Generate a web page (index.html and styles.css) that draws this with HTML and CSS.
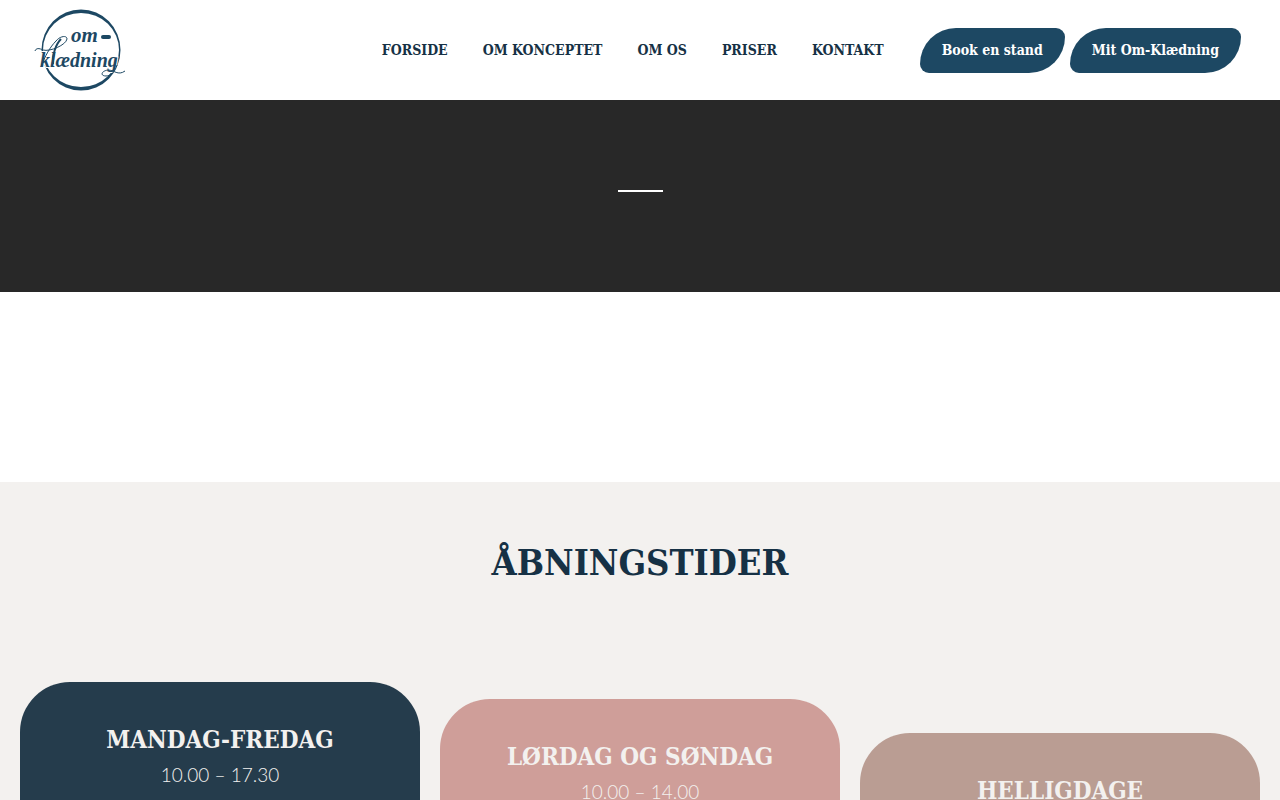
FILE: index.html
```html
<!DOCTYPE html>
<html lang="da">

<head>
    <meta charset="UTF-8">
    <meta name="viewport" content="width=device-width, initial-scale=1.0">
    <title>Om-Klædning</title>
    <link rel="stylesheet" href="styles.css">
</head>

<body>

    <header class="header">
        <a class="logo" href="#" aria-label="Om-Klædning">
            <svg width="92" height="82" viewBox="34 9 92 82">
                <path class="logo-ring" fill-rule="evenodd" d="M81 9.5a39.5 40.5 0 1 1 0 81a39.5 40.5 0 1 1 0-81zM81 13a38 37 0 1 0 0 74a38 37 0 1 0 0-74z"/>
                <g class="logo-gap">
                    <text x="71" y="42" font-size="21">om</text>
                    <text x="40" y="67" font-size="20">klædning</text>
                </g>
                <g class="logo-text">
                    <text x="71" y="42" font-size="21">om</text>
                    <text x="40" y="67" font-size="20">klædning</text>
                </g>
                <path class="logo-dash" d="M103 37h6"/>
                <path class="logo-swash" d="M35 51c1-3 4-3 8-1c7 2 23-5 24-11c0-4-7-3-11 2c-6 6-11 15-15 26M117 65c-2 7-6 11-11 11c-6 0-5-5 2-6c6 0 10 6 17 1"/>
                <path class="logo-stem" d="M61 39c-5 5-9 16-8 25"/>
            </svg>
        </a>
        <div class="header-right">
            <nav class="nav">
                <a href="#">FORSIDE</a>
                <a href="#">OM KONCEPTET</a>
                <a href="#">OM OS</a>
                <a href="#">PRISER</a>
                <a href="#">KONTAKT</a>
            </nav>
            <div class="actions">
                <a class="btn" href="#">Book en stand</a>
                <a class="btn" href="#">Mit Om-Klædning</a>
            </div>
        </div>
    </header>

    <main>
        <section class="hero">
            <div class="hero-line"></div>
        </section>

        <section class="intro"></section>

        <section class="hours">
            <h2>ÅBNINGSTIDER</h2>
            <div class="cards">
                <div class="card weekdays">
                    <h3>MANDAG-FREDAG</h3>
                    <p>10.00 – 17.30</p>
                </div>
                <div class="card weekend">
                    <h3>LØRDAG OG SØNDAG</h3>
                    <p>10.00 – 14.00</p>
                </div>
                <div class="card holidays">
                    <h3>HELLIGDAGE</h3>
                </div>
            </div>
        </section>
    </main>

</body>

</html>
```
FILE: styles.css
```css
* {
    box-sizing: border-box;
}

body {
    margin: 0;
    font-family: "DejaVu Serif Condensed", "DejaVu Serif", serif;
    color: #163145;
    background-color: #fff;
}

a {
    color: inherit;
    text-decoration: none;
}

.header {
    display: flex;
    align-items: center;
    justify-content: space-between;
    height: 100px;
    padding: 0 39px 0 34px;
}

.logo svg {
    display: block;
}

.logo text {
    font-family: "Liberation Serif", serif;
    font-style: italic;
    font-weight: bold;
}

.logo-ring,
.logo-text {
    fill: #1d4863;
}

.logo-gap {
    fill: #fff;
    stroke: #fff;
    stroke-width: 2px;
}

.logo-dash {
    stroke: #1d4863;
    stroke-width: 4px;
    stroke-linecap: round;
}

.logo-swash,
.logo-stem {
    fill: none;
    stroke: #1d4863;
    stroke-width: 1px;
}

.logo-stem {
    stroke-width: 2px;
}

.header-right {
    display: flex;
    align-items: center;
    gap: 36px;
}

.nav {
    display: flex;
    gap: 35px;
    font-size: 14px;
    font-weight: bold;
    white-space: nowrap;
}

.actions {
    display: flex;
    gap: 5px;
}

.btn {
    padding: 0 22px;
    border-radius: 36px 9px;
    font-size: 14px;
    font-weight: bold;
    line-height: 45px;
    white-space: nowrap;
    color: #fff;
    background-color: #1d4863;
}

.hero {
    padding: 90px 20px 100px;
    background-color: #282828;
}

.hero-line {
    width: 45px;
    height: 2px;
    margin: 0 auto;
    background-color: #fff;
}

.intro {
    height: 190px;
}

.hours {
    padding: 50px 20px;
    background-color: #f3f1ef;
}

.hours h2 {
    margin: 0 0 90px;
    font-size: 36px;
    line-height: 60px;
    text-align: center;
}

.cards {
    display: grid;
    grid-template-columns: repeat(3, 1fr);
    align-items: start;
    gap: 20px;
}

.card {
    min-height: 200px;
    padding: 40px 20px;
    border-radius: 50px;
    text-align: center;
    color: #f3f1ef;
}

.card h3 {
    margin: 0;
    font-size: 24px;
    line-height: 36px;
}

.card p {
    margin: 0;
    font-family: Lato, sans-serif;
    font-size: 19px;
    font-weight: 300;
    line-height: 34px;
}

.weekdays {
    background-color: #253c4c;
}

.weekend {
    margin-top: 17px;
    background-color: #cf9e99;
}

.holidays {
    margin-top: 51px;
    background-color: #ba9d93;
}
```
